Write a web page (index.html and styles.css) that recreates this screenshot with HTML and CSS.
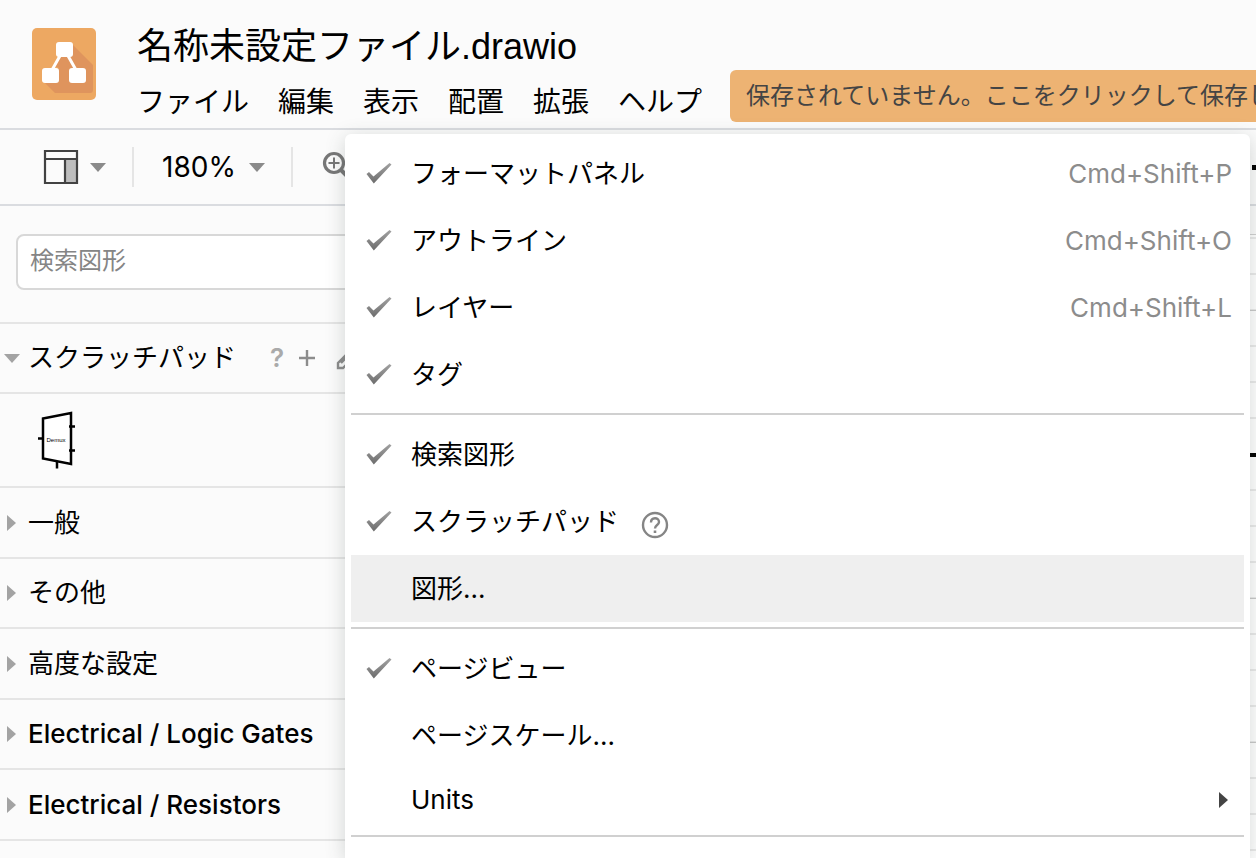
FILE: index.html
```html
<!DOCTYPE html>
<html lang="ja">
<head>
<meta charset="utf-8">
<title>名称未設定ファイル.drawio</title>
<link rel="stylesheet" href="styles.css">
</head>
<body>
<svg class="defs" aria-hidden="true">
  <defs>
    <linearGradient id="ink" x1="0" y1="0" x2="0" y2="1"><stop offset="0" stop-color="#a2a2a2"/><stop offset="1" stop-color="#6c6c6c"/></linearGradient>
    <symbol id="check" viewBox="0 0 28 24"><path d="M1.500 12 L4 10 L8.500 14.500 L24.500 1 L26.500 2.500 L8.800 21.500 Z" fill="url(#ink)"/></symbol>
    <symbol id="down" viewBox="0 0 16 9"><path d="M0 0H16L8 9Z" fill="currentColor"/></symbol>
    <symbol id="right" viewBox="0 0 9 16"><path d="M0 0L9 8L0 16Z" fill="currentColor"/></symbol>
  </defs>
</svg>
<header class="header">
  <svg class="logo" viewBox="0 0 64 72" aria-label="draw.io">
    <rect width="64" height="72" rx="5" fill="#eda862"/>
    <path d="M40 16 L61 37 V62 Q61 65 58 65 H23 L11 53 L27 40 L22 38 Z" fill="#df945d"/>
    <path d="M29 26 L20 42 M35 26 L44 42" stroke="#fff" stroke-width="3"/>
    <rect x="24" y="14" width="17" height="15" rx="3" fill="#fff"/>
    <rect x="10" y="40" width="17" height="15" rx="3" fill="#fff"/>
    <rect x="37" y="40" width="17" height="15" rx="3" fill="#fff"/>
  </svg>
  <div class="heading">
    <h1 class="title">名称未設定ファイル.drawio</h1>
    <nav class="menubar">
      <button>ファイル</button><button>編集</button><button>表示</button><button>配置</button><button>拡張</button><button>ヘルプ</button>
    </nav>
  </div>
  <button class="banner">保存されていません。ここをクリックして保存します。</button>
</header>
<div class="toolbar">
  <button class="tool view" aria-label="表示">
    <svg width="36" height="36" viewBox="0 0 36 36"><path d="M22 10H34V34H22Z" fill="#bdbdbd"/><path d="M2 2H34V34H2ZM2 10H34M22 10V34" fill="none" stroke="#424242" stroke-width="2.200"/></svg>
    <svg class="down"><use href="#down"/></svg>
  </button>
  <button class="tool percent">180%<svg class="down"><use href="#down"/></svg></button>
  <button class="tool zoom" aria-label="ズームイン">
    <svg width="32" height="32" viewBox="0 0 32 32" fill="none" stroke="#777"><circle cx="12" cy="12" r="9.500" stroke-width="3.200"/><path d="M12 6.500V17.500M6.500 12H17.500" stroke-width="2"/><path d="M18.500 18.500L28 28" stroke-width="4"/></svg>
  </button>
  <span class="stroke-width" aria-hidden="true"></span>
</div>
<main class="workspace">
  <aside class="sidebar">
    <div class="search"><input type="search" placeholder="検索図形" aria-label="検索図形"></div>
    <div class="section open">
      <svg class="down"><use href="#down"/></svg><span class="name">スクラッチパッド</span>
      <button class="help" aria-label="ヘルプ">?</button>
      <button aria-label="追加"><svg width="18" height="18" viewBox="0 0 18 18"><path d="M9 1V17M1 9H17" stroke="#8c8c8c" stroke-width="2.400"/></svg></button>
      <button class="edit" aria-label="編集"><svg width="24" height="24" viewBox="0 0 24 24"><path d="M2 22V17L17 2L22 7L7 22ZM5 17L15 7" fill="none" stroke="#8c8c8c" stroke-width="2.400"/></svg></button>
    </div>
    <div class="scratch">
      <svg width="40" height="60" viewBox="0 0 40 60">
        <path d="M5 8.500L33 3V54L5 48.500Z" fill="#fff" stroke="#000" stroke-width="2.500"/>
        <path d="M0 28.500H5M31 16.500H37M31 40.500H37M19 51V58.500" stroke="#000" stroke-width="2.500"/>
        <text class="part" x="18" y="32" text-anchor="middle">Demux</text>
      </svg>
    </div>
    <div class="section"><svg class="right"><use href="#right"/></svg><span class="name">一般</span></div>
    <div class="section"><svg class="right"><use href="#right"/></svg><span class="name">その他</span></div>
    <div class="section"><svg class="right"><use href="#right"/></svg><span class="name">高度な設定</span></div>
    <div class="section"><svg class="right"><use href="#right"/></svg><span class="name latin">Electrical / Logic Gates</span></div>
    <div class="section"><svg class="right"><use href="#right"/></svg><span class="name latin">Electrical / Resistors</span></div>
    <div class="section"></div>
  </aside>
  <div class="canvas"><div class="page"><div class="wire"></div></div></div>
</main>
<div class="menu" role="menu">
  <button class="item"><svg class="check"><use href="#check"/></svg><span>フォーマットパネル</span><kbd>Cmd+Shift+P</kbd></button>
  <button class="item"><svg class="check"><use href="#check"/></svg><span>アウトライン</span><kbd>Cmd+Shift+O</kbd></button>
  <button class="item"><svg class="check"><use href="#check"/></svg><span>レイヤー</span><kbd>Cmd+Shift+L</kbd></button>
  <button class="item"><svg class="check"><use href="#check"/></svg><span>タグ</span></button>
  <hr>
  <button class="item"><svg class="check"><use href="#check"/></svg><span>検索図形</span></button>
  <button class="item"><svg class="check"><use href="#check"/></svg><span>スクラッチパッド</span>
    <svg class="info" viewBox="0 0 28 28" fill="none" stroke="#858585"><circle cx="14" cy="14" r="12" stroke-width="2.400"/><path d="M10 11.500C10 6 18 6 18 11C18 14 14 14 14 17.500" stroke-width="2.400"/><path d="M14 19.500V22" stroke-width="2.600"/></svg></button>
  <button class="item active"><span>図形...</span></button>
  <hr>
  <button class="item"><svg class="check"><use href="#check"/></svg><span>ページビュー</span></button>
  <button class="item"><span>ページスケール...</span></button>
  <button class="item short"><span>Units</span><svg class="right sub"><use href="#right"/></svg></button>
  <hr>
</div>
</body>
</html>
```

FILE: styles.css
```css
* { box-sizing: border-box; }
body {
  margin: 0;
  height: 100vh;
  overflow: hidden;
  display: flex;
  flex-direction: column;
  position: relative;
  background: #fbfbfb;
  color: #000;
  font: 26px/32px Inter, "Noto Sans CJK JP", sans-serif;
}
button {
  margin: 0;
  padding: 0;
  border: 0;
  background: none;
  color: inherit;
  font: inherit;
  white-space: nowrap;
}
svg { display: block; flex: none; }
.defs { position: absolute; width: 0; height: 0; }
.down { width: 16px; height: 9px; color: #8a8a8a; }
.right { width: 9px; height: 16px; color: #a3a3a3; }

.header {
  display: flex;
  align-items: flex-start;
  flex: none;
  height: 130px;
  padding-left: 32px;
  border-bottom: 2px solid #dadce0;
  overflow: hidden;
}
.logo { width: 64px; height: 72px; margin: 28px 41px 0 0; }
.heading { flex: none; padding-top: 25px; }
.title { margin: 0; font-size: 36px; line-height: 44px; font-weight: 400; font-family: "Liberation Sans", "Noto Sans CJK JP", sans-serif; }
.menubar { display: flex; gap: 29px; margin-top: 15px; font-size: 28px; line-height: 36px; }
.banner {
  flex: none;
  height: 52px;
  margin: 70px 0 0 28px;
  padding: 0 16px;
  border-radius: 6px;
  background: #edb373;
  color: #444;
  font-size: 24px;
}

.toolbar {
  display: flex;
  align-items: center;
  flex: none;
  height: 76px;
  border-bottom: 2px solid #dadce0;
}
.tool { display: flex; align-items: center; height: 40px; }
.view { gap: 11px; padding: 0 26px 0 43px; }
.percent { gap: 13px; padding: 0 26px 0 28px; border: solid #e5e5e5; border-width: 0 2px; font-size: 28px; }
.zoom { padding-left: 29px; }
.stroke-width { width: 40px; height: 5px; margin: 0 -36px 0 auto; background: #000; }

.workspace { display: flex; flex: 1; min-height: 0; }
.sidebar { flex: none; width: 420px; overflow: hidden; }
.search { padding: 28px 16px 32px; }
.search input {
  display: block;
  width: 100%;
  height: 56px;
  padding: 0 12px 4px;
  border: 2px solid #d8d8d8;
  border-radius: 8px;
  background: #fff;
  font: 24px/32px Inter, "Noto Sans CJK JP", sans-serif;
}
.search input::placeholder { color: #858585; opacity: 1; }
.section {
  display: flex;
  align-items: center;
  height: 70px;
  padding-left: 7px;
  border-top: 2px solid #e5e5e5;
}
.section:nth-child(even):not(.open) { height: 71px; }
.section .right { margin-right: 12px; }
.section.open { padding-left: 4px; }
.section.open .down { margin-right: 8px; color: #a3a3a3; }
.latin { font-weight: 500; }
.help { margin: 0 14px 0 34px; color: #aaa; font-size: 26px; font-weight: 600; }
.edit { margin-left: 20px; }
.scratch { height: 94px; padding: 16px 38px; border-top: 2px solid #e5e5e5; }
.part { font: 6px "Liberation Sans", sans-serif; }

.canvas { flex: 1; padding-top: 28px; }
.page {
  height: 100%;
  border-top: 1px solid #d0d0d0;
  padding-top: 218px;
  background:
    repeating-linear-gradient(#0000 0 75px, #c9c9c9 75px 76px, #0000 76px 144px),
    repeating-linear-gradient(#0000 0 2px, #eaeaea 2px 4px, #0000 4px 36px),
    #fff;
}
.wire { height: 4px; background: #000; }

.menu {
  position: absolute;
  top: 134px;
  left: 345px;
  right: 6px;
  bottom: 0;
  overflow: hidden;
  padding: 6px;
  border-radius: 6px 6px 0 0;
  background: #fff;
  box-shadow: 0 4px 20px rgba(60, 75, 70, 0.22);
}
.item {
  display: flex;
  align-items: center;
  width: 100%;
  height: 67px;
  padding: 0 12px 0 60px;
  text-align: left;
}
.item.active { background: #efefef; }
.item.short { height: 61px; }
.check { width: 28px; height: 24px; margin: 0 18px 0 -46px; }
kbd { margin-left: auto; color: #8c8c8c; font: inherit; }
.info { width: 28px; height: 28px; margin: 6px 0 0 22px; }
.sub { margin: 0 4px 0 auto; color: #444; }
.menu hr { height: 2px; margin: 5px 0 6px; border: 0; background: #d0d0d0; }
```
